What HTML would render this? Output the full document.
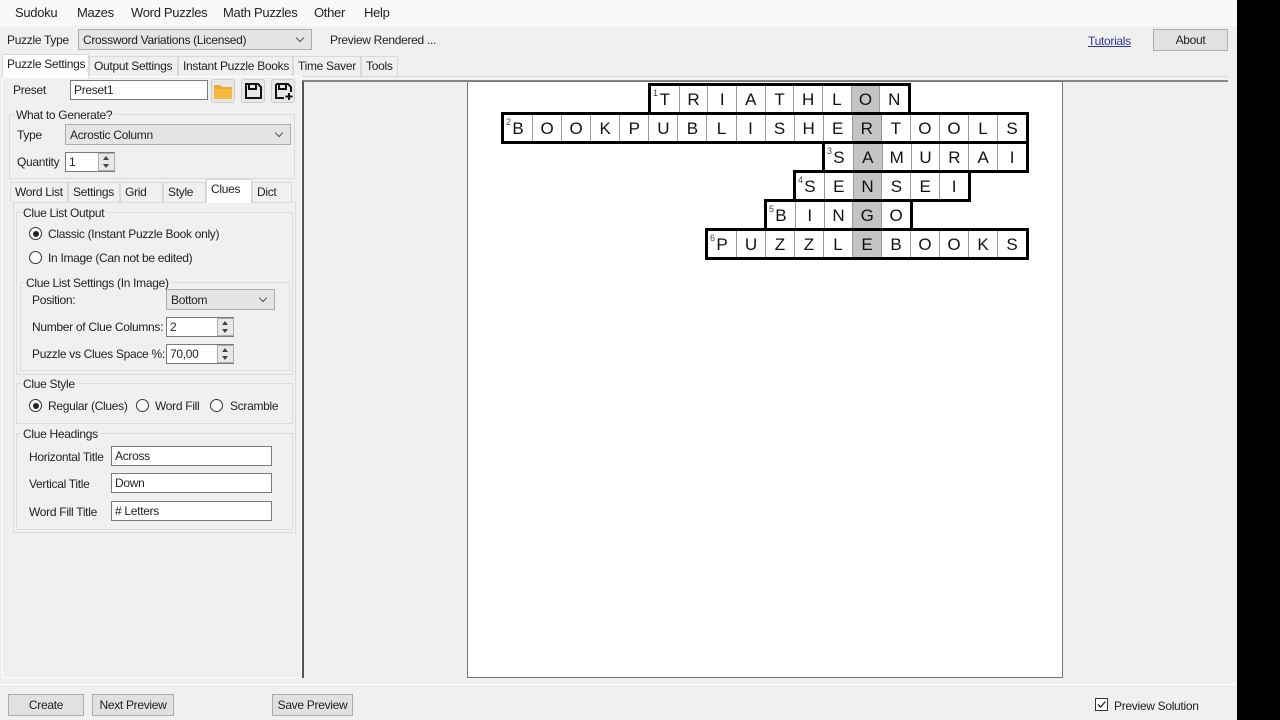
<!DOCTYPE html>
<html><head><meta charset="utf-8">
<style>
*{box-sizing:border-box;margin:0;padding:0}
body{width:1280px;height:720px;overflow:hidden;background:#f0f0f0;font-family:"Liberation Sans",sans-serif;font-size:12px;letter-spacing:-0.3px;color:#222;position:relative}
.a{position:absolute;white-space:nowrap}
.menu{left:0;top:0;width:1237px;height:26px;background:#f9f9f9}
.menu span{position:absolute;top:5px;font-size:13px}
.black{left:1237px;top:0;width:43px;height:720px;background:#000}
.combo{background:#e5e5e5;border:1px solid #adadad;padding:3px 4px;height:21px}
.combo:after{content:"";position:absolute;right:8px;top:5px;width:5px;height:5px;border-right:1px solid #555;border-bottom:1px solid #555;transform:rotate(45deg)}
.tb{background:#fff;border:1px solid #7a7a7a;padding:2px 3px;height:20px}
.btn{background:#e1e1e1;border:1px solid #adadad;text-align:center;height:22px;line-height:20px}
.tab{top:56px;height:20px;border:1px solid #d9d9d9;border-bottom:none;line-height:18px;padding-left:4px;background:#f0f0f0;overflow:hidden}
.grp{border:1px solid #dcdcdc}
.lg{background:#f0f0f0;padding:0 2px}
.radio{width:13px;height:13px;border:1px solid #333;border-radius:50%;background:#fff}
.radio.on:after{content:"";position:absolute;left:2.5px;top:2.5px;width:6px;height:6px;border-radius:50%;background:#222}
.spin{width:17px;height:18px;border:1px solid #adadad;background:#e8e8e8}
.spin:before{content:"";position:absolute;left:4px;top:2px;border:3px solid transparent;border-bottom:4px solid #444;border-top:none}
.spin:after{content:"";position:absolute;left:4px;top:10px;border:3px solid transparent;border-top:4px solid #444;border-bottom:none}
.row{position:absolute;border:3px solid #000;display:flex;background:#fff;height:32px;letter-spacing:0}
.row span{flex:1;height:26px;border-right:1px solid #999;font-size:17px;text-align:center;line-height:27px;position:relative;color:#111}
.row span:last-child{border-right:none}
.row span.h{background:#c4c4c4}
.row sup{position:absolute;left:2px;top:3px;font-size:9px;line-height:9px;color:#444}
</style></head><body>
<div class="a menu">
<span style="left:15px">Sudoku</span><span style="left:77px">Mazes</span><span style="left:131px">Word Puzzles</span><span style="left:223px">Math Puzzles</span><span style="left:314px">Other</span><span style="left:364px">Help</span>
</div>
<div class="a black"></div>
<div class="a" style="left:7px;top:33px">Puzzle Type</div>
<div class="a combo" style="left:78px;top:29px;width:234px">Crossword Variations (Licensed)</div>
<div class="a" style="left:330px;top:33px">Preview Rendered ...</div>
<div class="a" style="left:1088px;top:34px;color:#3333aa;text-decoration:underline">Tutorials</div>
<div class="a btn" style="left:1153px;top:29px;width:75px">About</div>

<div class="a tab" style="left:2px;top:54px;width:87px;height:24px;background:#fff;z-index:2">Puzzle Settings</div>
<div class="a tab" style="left:89px;width:89px">Output Settings</div>
<div class="a tab" style="left:178px;width:115px">Instant Puzzle Books</div>
<div class="a tab" style="left:293px;width:68px">Time Saver</div>
<div class="a tab" style="left:361px;width:37px">Tools</div>
<div class="a" style="left:2px;top:76px;width:1226px;height:1px;background:#d9d9d9"></div>
<div class="a" style="left:2px;top:76px;width:300px;height:602px;background:#f0f0f0;border:1px solid #fff"></div>

<div class="a" style="left:13px;top:83px">Preset</div>
<div class="a tb" style="left:70px;top:80px;width:138px">Preset1</div>
<div class="a" style="left:211px;top:79px;width:24px;height:24px;background:#e8e8e8;border:1px solid #ccc;border-radius:3px"><svg width="22" height="22" viewBox="0 0 22 22"><path d="M2 5h6l2 2h10v12H2z" fill="#f0a830"/><path d="M2 9h18v10H2z" fill="#f6b93b"/></svg></div>
<div class="a" style="left:241px;top:79px;width:24px;height:24px;background:#e8e8e8;border:1px solid #ccc;border-radius:3px"><svg width="22" height="22" viewBox="0 0 22 22"><path d="M4 4h12l3 3v11H4z" fill="none" stroke="#111" stroke-width="2"/><path d="M7 4v5h7V4" fill="none" stroke="#111" stroke-width="2"/></svg></div>
<div class="a" style="left:271px;top:79px;width:24px;height:24px;background:#e8e8e8;border:1px solid #ccc;border-radius:3px"><svg width="22" height="22" viewBox="0 0 22 22"><path d="M4 4h12l3 3v5M12 18H4V4" fill="none" stroke="#111" stroke-width="2"/><path d="M7 4v5h7V4M17 13v7M13.5 16.5h7" fill="none" stroke="#111" stroke-width="2"/></svg></div>

<div class="a grp" style="left:9px;top:114px;width:286px;height:65px"></div>
<div class="a lg" style="left:14px;top:108px">What to Generate?</div>
<div class="a" style="left:17px;top:128px">Type</div>
<div class="a combo" style="left:65px;top:124px;width:226px">Acrostic Column</div>
<div class="a" style="left:17px;top:155px">Quantity</div>
<div class="a tb" style="left:65px;top:152px;width:50px">1</div>
<div class="a spin" style="left:98px;top:153px"></div>

<div class="a tab" style="left:10px;top:182px;width:58px">Word List</div>
<div class="a tab" style="left:68px;top:182px;width:52px">Settings</div>
<div class="a tab" style="left:120px;top:182px;width:43px">Grid</div>
<div class="a tab" style="left:163px;top:182px;width:43px">Style</div>
<div class="a tab" style="left:206px;top:179px;width:46px;height:24px;background:#fff;z-index:2">Clues</div>
<div class="a tab" style="left:252px;top:182px;width:40px">Dict</div>
<div class="a" style="left:13px;top:202px;width:283px;height:331px;border:1px solid #dcdcdc"></div>

<div class="a grp" style="left:16px;top:212px;width:277px;height:163px"></div>
<div class="a lg" style="left:21px;top:206px">Clue List Output</div>
<div class="a radio on" style="left:29px;top:227px"></div><div class="a" style="left:48px;top:227px">Classic (Instant Puzzle Book only)</div>
<div class="a radio" style="left:29px;top:251px"></div><div class="a" style="left:48px;top:251px">In Image (Can not be edited)</div>
<div class="a grp" style="left:20px;top:282px;width:270px;height:89px"></div>
<div class="a lg" style="left:24px;top:276px">Clue List Settings (In Image)</div>
<div class="a" style="left:32px;top:293px">Position:</div>
<div class="a combo" style="left:166px;top:289px;width:109px">Bottom</div>
<div class="a" style="left:32px;top:320px">Number of Clue Columns:</div>
<div class="a tb" style="left:166px;top:317px;width:68px">2</div><div class="a spin" style="left:217px;top:318px"></div>
<div class="a" style="left:32px;top:347px">Puzzle vs Clues Space %:</div>
<div class="a tb" style="left:166px;top:344px;width:68px">70,00</div><div class="a spin" style="left:217px;top:345px"></div>

<div class="a grp" style="left:16px;top:383px;width:277px;height:41px"></div>
<div class="a lg" style="left:21px;top:377px">Clue Style</div>
<div class="a radio on" style="left:29px;top:399px"></div><div class="a" style="left:48px;top:399px">Regular (Clues)</div>
<div class="a radio" style="left:136px;top:399px"></div><div class="a" style="left:155px;top:399px">Word Fill</div>
<div class="a radio" style="left:210px;top:399px"></div><div class="a" style="left:230px;top:399px">Scramble</div>

<div class="a grp" style="left:16px;top:433px;width:277px;height:97px"></div>
<div class="a lg" style="left:21px;top:427px">Clue Headings</div>
<div class="a" style="left:29px;top:450px">Horizontal Title</div><div class="a tb" style="left:111px;top:446px;width:161px">Across</div>
<div class="a" style="left:29px;top:477px">Vertical Title</div><div class="a tb" style="left:111px;top:473px;width:161px">Down</div>
<div class="a" style="left:29px;top:505px">Word Fill Title</div><div class="a tb" style="left:111px;top:501px;width:161px"># Letters</div>

<div class="a" style="left:302px;top:80px;width:926px;height:598px;background:#f0f0f0;border-left:2px solid #555;border-top:2px solid #888"></div>
<div class="a" style="left:467px;top:81px;width:596px;height:597px;background:#fff;border:1px solid #777"></div>

<div class="row" style="left:648px;top:83px;width:263px"><span><sup>1</sup>T</span><span>R</span><span>I</span><span>A</span><span>T</span><span>H</span><span>L</span><span class="h">O</span><span>N</span></div>
<div class="row" style="left:501px;top:112px;width:528px"><span><sup>2</sup>B</span><span>O</span><span>O</span><span>K</span><span>P</span><span>U</span><span>B</span><span>L</span><span>I</span><span>S</span><span>H</span><span>E</span><span class="h">R</span><span>T</span><span>O</span><span>O</span><span>L</span><span>S</span></div>
<div class="row" style="left:822px;top:141px;width:207px"><span><sup>3</sup>S</span><span class="h">A</span><span>M</span><span>U</span><span>R</span><span>A</span><span>I</span></div>
<div class="row" style="left:793px;top:170px;width:178px"><span><sup>4</sup>S</span><span>E</span><span class="h">N</span><span>S</span><span>E</span><span>I</span></div>
<div class="row" style="left:764px;top:199px;width:149px"><span><sup>5</sup>B</span><span>I</span><span>N</span><span class="h">G</span><span>O</span></div>
<div class="row" style="left:705px;top:228px;width:324px"><span><sup>6</sup>P</span><span>U</span><span>Z</span><span>Z</span><span>L</span><span class="h">E</span><span>B</span><span>O</span><span>O</span><span>K</span><span>S</span></div>

<div class="a" style="left:0;top:684px;width:1237px;height:1px;background:#fff"></div>
<div class="a btn" style="left:8px;top:694px;width:76px">Create</div>
<div class="a btn" style="left:92px;top:694px;width:82px">Next Preview</div>
<div class="a btn" style="left:272px;top:694px;width:81px">Save Preview</div>
<div class="a" style="left:1095px;top:698px;width:13px;height:13px;border:1px solid #333;background:#fff"><svg width="11" height="11" viewBox="0 0 11 11" style="position:absolute;left:0;top:0"><path d="M2 5.5l2.5 2.5L9.5 2.5" fill="none" stroke="#222" stroke-width="1.3"/></svg></div>
<div class="a" style="left:1114px;top:699px">Preview Solution</div>
</body></html>
